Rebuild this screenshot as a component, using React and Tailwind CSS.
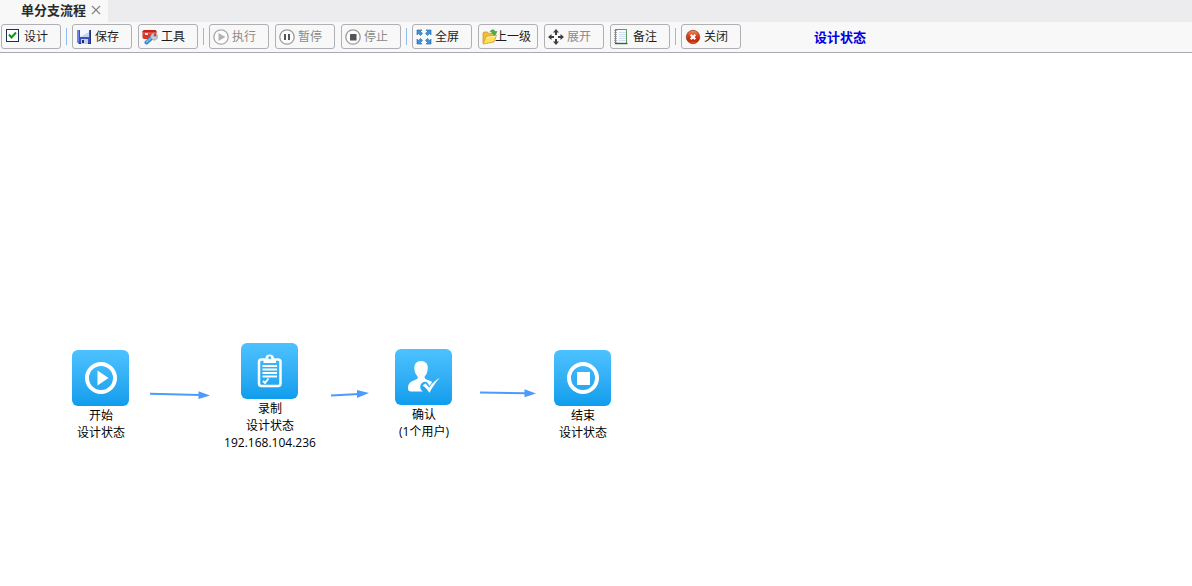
import React from "react";

function Svg16({ children }) {
  return (
    <svg viewBox="0 0 16 16" className="h-4 w-4 shrink-0" aria-hidden="true">
      {children}
    </svg>
  );
}

const SaveIcon = () => (
  <Svg16>
    <path d="M1 1H15V15H3L1 13Z" fill="#3a50bd" />
    <path d="M1 1H3V13.500L1 12.500Z" fill="#6b86e8" />
    <path d="M14 1H15V15H3V14H14Z" fill="#262f86" />
    <rect x="4" y="1" width="9" height="7" fill="#f3f6ff" />
    <path d="M4 8L13 3V8Z" fill="#c6d2f4" />
    <rect x="5" y="10" width="7" height="5" fill="#c9cfe0" />
    <rect x="6" y="11" width="2" height="3" fill="#232b6e" />
  </Svg16>
);

const ToolIcon = () => (
  <Svg16>
    <path d="M0.500 2.500L2 1H13.500L14.500 2.500V10H2L0.500 9Z" fill="#dc3426" />
    <path d="M0.500 2.500L2 1H13.500L14.500 2.500L14 4H1Z" fill="#c4251b" />
    <path d="M1 4H14" stroke="#f2887b" strokeWidth="0.800" />
    <rect x="3" y="4" width="3" height="2" fill="#f9ddd8" />
    <path d="M4.500 13.500L10 8.500" stroke="#2f86c0" strokeWidth="4" strokeLinecap="round" />
    <path d="M4.500 13L9.500 8.500" stroke="#6cb8e6" strokeWidth="2" strokeLinecap="round" />
    <path d="M9 9C8 6.500 9.500 4 12.500 4L11.500 6.500L13 7.500L15.500 6.500C16 9.500 14 11.500 11 11Z" fill="#c3cdd6" stroke="#8795a3" strokeWidth="0.700" />
  </Svg16>
);

const RunIcon = () => (
  <Svg16>
    <circle cx="8" cy="8" r="7.200" fill="#fdfdfd" stroke="#a8a8a8" strokeWidth="1.300" />
    <path d="M5.500 4L12.500 8L5.500 12Z" fill="#b3b3b3" />
  </Svg16>
);

const PauseIcon = () => (
  <Svg16>
    <circle cx="8" cy="8" r="7.200" fill="#fdfdfd" stroke="#9a9a9a" strokeWidth="1.300" />
    <rect x="5" y="5" width="2" height="6" fill="#555555" />
    <rect x="9" y="5" width="2" height="6" fill="#555555" />
  </Svg16>
);

const StopIcon = () => (
  <Svg16>
    <circle cx="8" cy="8" r="7.200" fill="#fdfdfd" stroke="#9a9a9a" strokeWidth="1.300" />
    <rect x="5" y="5" width="6.500" height="6.500" rx="0.500" fill="#555555" />
  </Svg16>
);

const FullscreenIcon = () => (
  <Svg16>
    <g fill="#3f93d8" stroke="#1d62a6" strokeWidth="0.600">
      <path d="M1 1H6L4.500 2.500L6.500 4.500L4.500 6.500L2.500 4.500L1 6Z" />
      <path d="M15 1V6L13.500 4.500L11.500 6.500L9.500 4.500L11.500 2.500L10 1Z" />
      <path d="M1 15V10L2.500 11.500L4.500 9.500L6.500 11.500L4.500 13.500L6 15Z" />
      <path d="M15 15H10L11.500 13.500L9.500 11.500L11.500 9.500L13.500 11.500L15 10Z" />
    </g>
  </Svg16>
);

const FolderUpIcon = () => (
  <Svg16>
    <path d="M1 14V4L2 3H5.500L7 4.500H12V8" fill="#efbf3a" stroke="#d09a2c" strokeWidth="0.800" />
    <path d="M1 15L4 7.500L14.500 6L12 13Z" fill="#ffe05a" stroke="#d09a2c" strokeWidth="0.800" />
    <path d="M4.500 8.500L13.500 7.200" stroke="#fff8c8" />
    <path d="M8 3C9 0.500 12 0 13 2.500H15L12.800 6.500L9.500 3.500H11.200C10.800 2.300 9.500 2 8 3Z" fill="#4cb043" stroke="#2b8c2a" strokeWidth="0.500" />
  </Svg16>
);

const ExpandIcon = () => (
  <Svg16>
    <g fill="#3d3d3d">
      <path d="M8 0L11 3.500H9V6H7V3.500H5Z" />
      <path d="M8 16L11 12.500H9V10H7V12.500H5Z" />
      <path d="M0 8L3.500 5V7H6V9H3.500V11Z" />
      <path d="M16 8L12.500 5V7H10V9H12.500V11Z" />
    </g>
  </Svg16>
);

const NoteIcon = () => (
  <Svg16>
    <rect x="1.500" y="0.500" width="11" height="14" fill="#f7faff" stroke="#5a9d62" />
    <path d="M1 14.500H13.500" stroke="#2f6b3a" strokeWidth="1.400" />
    <path d="M5 3.500H12M5 5.500H12M5 7.500H12M5 9.500H12M5 11.500H12" stroke="#d3def2" />
    <path d="M1.500 1V14" stroke="#8a8f8c" strokeWidth="2.500" strokeDasharray="1 1" />
  </Svg16>
);

const CloseIcon = () => (
  <Svg16>
    <defs>
      <linearGradient id="close-red" x1="0" y1="0" x2="0" y2="1">
        <stop offset="0" stopColor="#f0916e" />
        <stop offset="0.45" stopColor="#d93a15" />
        <stop offset="0.8" stopColor="#c22a08" />
        <stop offset="1" stopColor="#ec6a2c" />
      </linearGradient>
    </defs>
    <circle cx="8" cy="8" r="6.700" fill="url(#close-red)" stroke="#9c3a22" strokeWidth="0.800" />
    <path d="M5.700 5.700L10.300 10.300M10.300 5.700L5.700 10.300" stroke="#ffffff" strokeWidth="2.200" />
  </Svg16>
);

const boxClass =
  "flex h-[25px] w-[60px] items-center gap-[3px] rounded-[3px] border border-[#b0b0b4] bg-[#f8f8f8] pl-[3px] text-xs text-[#1e1e1e]";

function ToolButton({ icon: Icon, label, disabled }) {
  return (
    <button type="button" disabled={disabled} className={`${boxClass} disabled:text-[#8a8a8a]`}>
      <Icon />
      <span className="flex w-6 justify-center whitespace-nowrap">{label}</span>
    </button>
  );
}

function DesignToggle() {
  return (
    <label className={boxClass}>
      <span className="grid h-4 w-4 shrink-0 place-items-start pl-px">
        <input
          type="checkbox"
          defaultChecked
          className="peer col-start-1 row-start-1 h-[13px] w-[13px] appearance-none border border-[#1c2f55] bg-white"
        />
        <svg
          viewBox="0 0 13 13"
          className="pointer-events-none invisible col-start-1 row-start-1 h-[13px] w-[13px] peer-checked:visible"
          aria-hidden="true"
        >
          <path d="M3 5.500L5.500 8.500L10 3.500" fill="none" stroke="#0a9a0a" strokeWidth="2" />
        </svg>
      </span>
      <span className="flex w-6 justify-center whitespace-nowrap">设计</span>
    </label>
  );
}

const Separator = () => <span className="h-[17px] w-px bg-[#8fbdf0]" />;
const Group = ({ children }) => <div className="flex gap-1.5">{children}</div>;

const PlayGlyph = () => (
  <>
    <circle cx="29" cy="28" r="14" fill="none" stroke="#ffffff" strokeWidth="4" />
    <path d="M25.500 20.500V35.500L36.500 28Z" fill="#ffffff" />
  </>
);

const StopGlyph = () => (
  <>
    <circle cx="29" cy="28" r="14" fill="none" stroke="#ffffff" strokeWidth="4" />
    <rect x="23" y="22" width="13" height="13" fill="#ffffff" />
  </>
);

const ClipboardGlyph = () => (
  <>
    <path d="M23 16.500H20.500Q18 16.500 18 19V40.500Q18 43 20.500 43H37Q39.500 43 39.500 40.500V19Q39.500 16.500 37 16.500H34.500" fill="none" stroke="#ffffff" strokeWidth="2.500" />
    <path fillRule="evenodd" d="M22.500 20V16.500Q22.500 15 24.500 15A4.200 3.500 0 0 1 32.900 15Q35 15 35 16.500V20ZM28.700 13.200A1.500 1.500 0 1 0 28.710 16.200A1.500 1.500 0 1 0 28.700 13.200Z" fill="#ffffff" />
    <path d="M21.500 23H36M21.500 26.500H36M21.500 30H36M21.500 33.500H36" stroke="#ffffff" strokeWidth="1.800" />
    <path d="M22 38L24 40L27.500 35.500" fill="none" stroke="#ffffff" strokeWidth="2" />
  </>
);

const UserCheckGlyph = () => (
  <>
    <path
      d="M26 12C30.500 12 33 15 32.800 19C32.600 23 31.500 25.500 30 27C29.200 28 29.500 29.500 31 30.300C33 31.300 35.500 31.800 37.200 33L34.500 37L32 33.200C29 32 25.500 34 25.200 37.500C25 40 26.500 41.500 28 42.500H16C14 42.500 13 41.500 13 39.500C13 34 16 32.500 19.500 31.200C22.500 30 23.500 29 22.500 27.500C20.500 25 19.300 22.500 19.300 19C19.300 15 21.500 12 26 12Z"
      fill="#ffffff"
    />
    <path d="M27.500 36.500L30.500 34.500L34.200 38.500C37 34.500 40.500 31 44.800 28.800C41 33 37.500 38 34.500 43.800C32.500 41 30.500 38.500 27.500 36.500Z" fill="#ffffff" />
  </>
);

function Node({ className, glyph: Glyph, lines }) {
  return (
    <div className={`absolute flex w-[58px] flex-col whitespace-nowrap text-xs leading-[17px] text-black ${className}`}>
      <div className="mb-px w-[57px] rounded-md bg-linear-to-b from-[#4cc2ff] to-[#0c9dec]">
        <svg viewBox="0 0 57 56" className="h-14 w-[57px]" aria-hidden="true">
          <Glyph />
        </svg>
      </div>
      {lines.map((line) => (
        <span key={line} className="self-center">
          {line}
        </span>
      ))}
    </div>
  );
}

function Connectors() {
  return (
    <svg className="absolute top-0 left-0 h-full w-full" fill="#4b9bff" stroke="#4b9bff" aria-hidden="true">
      <g strokeWidth="2">
        <path d="M150 340.700L200 342" />
        <path d="M331 342.500L359 341" />
        <path d="M480 339.500L526 340.200" />
      </g>
      <g stroke="none">
        <path d="M210 342.500L198.500 338.200V346Z" />
        <path d="M369 340L357 337V345Z" />
        <path d="M536 340.500L524.500 336.200V344.200Z" />
      </g>
    </svg>
  );
}

export default function App() {
  return (
    <div className="flex min-h-screen flex-col bg-white font-['Open_Sans','Noto_Sans_CJK_SC',sans-serif]">
      <nav className="flex h-[22px] bg-[#ececee]">
        <div className="flex items-center gap-1 bg-[#f8f8f8] pr-1.5 pb-0.5 pl-[21px]">
          <span className="text-[13px] leading-5 font-bold text-[#2a2a2a]">单分支流程</span>
          <button type="button" aria-label="关闭标签" className="grid h-3 w-3 place-items-center">
            <svg viewBox="0 0 10 10" className="h-2.5 w-2.5" aria-hidden="true">
              <path d="M1 1L9 9M9 1L1 9" stroke="#858585" strokeWidth="1.200" />
            </svg>
          </button>
        </div>
      </nav>

      <header className="flex items-center border-b border-[#aaa9b2] bg-[#f8f8f8] pt-0.5 pb-[3px] pl-px">
        <div className="flex items-center gap-[5px]">
          <DesignToggle />
          <Separator />
          <Group>
            <ToolButton icon={SaveIcon} label="保存" />
            <ToolButton icon={ToolIcon} label="工具" />
          </Group>
          <Separator />
          <Group>
            <ToolButton icon={RunIcon} label="执行" disabled />
            <ToolButton icon={PauseIcon} label="暂停" disabled />
            <ToolButton icon={StopIcon} label="停止" disabled />
          </Group>
          <Separator />
          <Group>
            <ToolButton icon={FullscreenIcon} label="全屏" />
            <ToolButton icon={FolderUpIcon} label="上一级" />
            <ToolButton icon={ExpandIcon} label="展开" disabled />
            <ToolButton icon={NoteIcon} label="备注" />
          </Group>
          <Separator />
          <ToolButton icon={CloseIcon} label="关闭" />
        </div>
        <span className="ml-[73px] text-[13px] leading-5 font-bold text-[#0000e6]">设计状态</span>
      </header>

      <main className="relative flex-1">
        <Connectors />
        <Node className="top-[297px] left-[72px]" glyph={PlayGlyph} lines={["开始", "设计状态"]} />
        <Node className="top-[290px] left-[241px]" glyph={ClipboardGlyph} lines={["录制", "设计状态", "192.168.104.236"]} />
        <Node className="top-[296px] left-[395px]" glyph={UserCheckGlyph} lines={["确认", "(1个用户)"]} />
        <Node className="top-[297px] left-[554px]" glyph={StopGlyph} lines={["结束", "设计状态"]} />
      </main>
    </div>
  );
}
